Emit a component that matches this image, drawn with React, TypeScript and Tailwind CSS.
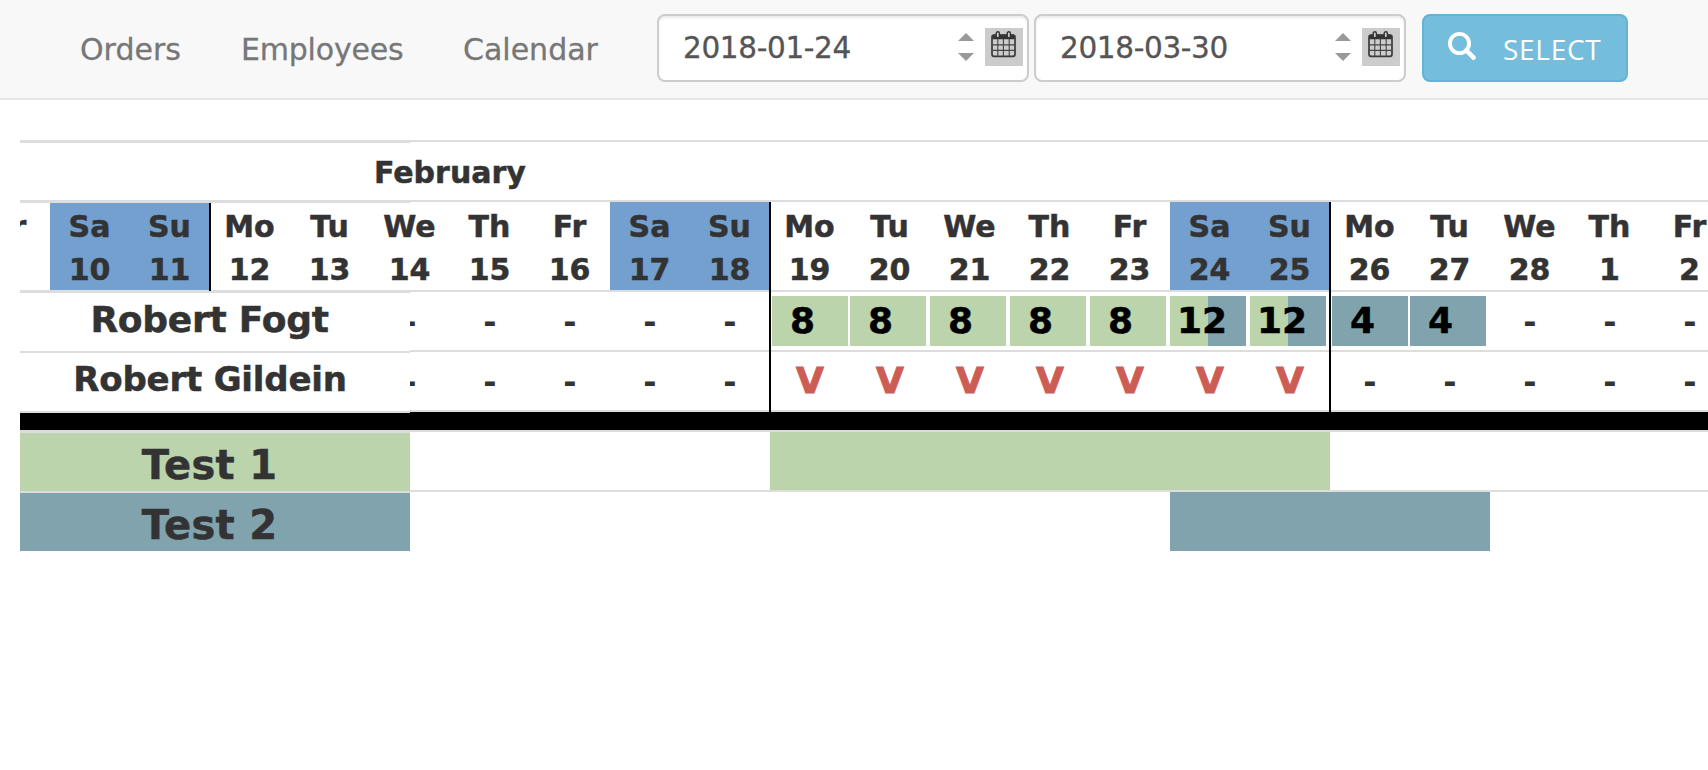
import React from "react";

type Day = { name: string; date: string; weekend: boolean };

const names = ["Fr", "Sa", "Su", "Mo", "Tu", "We", "Th"];
const days: Day[] = Array.from({ length: 22 }, (_, i) => ({
  name: names[i % 7],
  date: i === 0 ? "" : String(i + 9 > 28 ? i - 19 : i + 9),
  weekend: i % 7 === 1 || i % 7 === 2,
}));

function CalendarIcon() {
  return (
    <svg width="25" height="27" viewBox="0 0 25 27" className="block">
      <path d="M1.2 8.3V5.5Q1.2 3.4 3.2 3.4H21.8Q23.8 3.4 23.8 5.5V8.3Z" fill="#333" />
      <rect x="1" y="4" width="23" height="21.3" rx="2" fill="none" stroke="#3a3a3a" strokeWidth="1.7" />
      <path d="M6.8 8V25M12.4 8V25M18.2 8V25M1 13.9H24M1 19.4H24" stroke="#444" strokeWidth="1.1" />
      <rect x="5.2" y="0.8" width="3.2" height="6" rx="1.6" fill="#ccc" stroke="#333" strokeWidth="1.4" />
      <rect x="16.2" y="0.8" width="3.2" height="6" rx="1.6" fill="#ccc" stroke="#333" strokeWidth="1.4" />
    </svg>
  );
}

function DateInput({ value }: { value: string }) {
  return (
    <div className="flex h-[68px] w-[372px] shrink-0 items-start rounded-[8px] border-2 border-[#ccc] bg-white pl-[24px] shadow-[inset_0_2px_2px_rgba(0,0,0,0.075)]">
      <span className="mt-[11px] w-[275px] text-[29.5px] leading-[42px] tracking-[-0.35px] text-[#555] [-webkit-text-stroke:0.3px_#555]">{value}</span>
      <svg width="16" height="28" viewBox="0 0 16 28" className="mt-[17px] shrink-0">
        <path d="M0 8L8 0L16 8ZM0 20L8 28L16 20Z" fill="#999" />
      </svg>
      <span className="mt-[12px] ml-[11px] h-[38px] w-[38px] shrink-0 bg-[#ccc] pt-[3px] pl-[5.5px]">
        <CalendarIcon />
      </span>
    </div>
  );
}

function Hours({ total, kind }: { total: string; kind: "green" | "teal" | "both" }) {
  const fill =
    kind === "green"
      ? "bg-[#bcd4ac]"
      : kind === "teal"
        ? "bg-[#80a3ad]"
        : "bg-[linear-gradient(90deg,#bcd4ac_50%,#80a3ad_50%)]";
  return (
    <div className={`h-[50px] w-[76px] shrink-0 text-[36px] leading-[50px] font-bold text-black ${fill} ${kind === "both" ? "pl-[7px]" : "pl-[18px]"}`}>
      {total}
    </div>
  );
}

function Dash() {
  return <span className="w-[80px] shrink-0 text-center text-[32px] [-webkit-text-stroke:0px]">-</span>;
}

export default function App() {
  return (
    <div className="h-[770px] w-full overflow-hidden bg-white font-['DejaVu_Sans',Verdana,sans-serif] text-[#333]">
      <header className="flex h-[100px] items-start border-b-2 border-[#e7e7e7] bg-[#f8f8f8] pt-[14px]">
        <nav className="flex w-[657px] shrink-0 pl-[80px] text-[30px] leading-[71px] text-[#777] [-webkit-text-stroke:0.3px_#777]">
          <a className="w-[161px] shrink-0">Orders</a>
          <a className="w-[222px] shrink-0 tracking-[-0.2px]">Employees</a>
          <a>Calendar</a>
        </nav>
        <div className="flex shrink-0 gap-[5px]">
          <DateInput value="2018-01-24" />
          <DateInput value="2018-03-30" />
        </div>
        <button className="ml-[16px] flex h-[68px] w-[206px] shrink-0 items-start rounded-[8px] border-2 border-[#62b3d6] bg-[#75bddc] pl-[24px] text-white">
          <svg width="28" height="28" viewBox="0 0 28 28" className="mt-[16px] shrink-0">
            <circle cx="11.5" cy="11.5" r="9.6" fill="none" stroke="#fff" strokeWidth="3.8" />
            <path d="M18.5 18.5L25.5 25.7" stroke="#fff" strokeWidth="4.6" strokeLinecap="round" />
          </svg>
          <span className="mt-[12px] ml-[27px] font-['Open_Sans',sans-serif] text-[28px] leading-[42px] tracking-[0.7px]">SELECT</span>
        </button>
      </header>

      <main className="ml-[20px] pt-[40px] [-webkit-text-stroke:0.5px]">
        <div className="flex h-[60px]">
          <div className="w-[390px] shrink-0 border-t-3 border-[#ddd]" />
          <div className="w-[1298px] shrink-0 border-t-2 border-[#ddd]">
            <div className="ml-[-36px] pt-[9px] text-[30px] leading-[43px] font-bold">February</div>
          </div>
        </div>

        <div className="flex h-[3px] items-start">
          <div className="h-[3px] w-[390px] shrink-0 bg-[#ddd]" />
          <div className="h-[2px] w-[1298px] shrink-0 bg-[#ddd]" />
        </div>
        <div className="mt-[-1px] flex h-[88px] overflow-hidden">
          <div className="ml-[-50px] flex">
            {days.map((d, i) => (
              <div
                key={i}
                className={`w-[80px] shrink-0 pr-px text-center text-[30px] leading-[44px] font-bold ${d.weekend ? "bg-[#74a0d0]" : ""} ${i < 3 ? "border-t border-[#ddd] pt-[2px]" : "pt-[3px]"}`}
              >
                <div>{d.name}</div>
                <div className="mt-[-1px]">{d.date}</div>
              </div>
            ))}
          </div>
        </div>
        <div className="flex h-[3px] items-start">
          <div className="h-[3px] w-[390px] shrink-0 bg-[#ddd]" />
          <div className="h-[2px] w-[1298px] shrink-0 bg-[#ddd]" />
        </div>

        <div className="flex h-[137px]">
          <div className="w-[390px] shrink-0 bg-white text-[36px] font-bold">
            <div className="flex h-[60px] justify-center border-b-2 border-[#ddd] pr-[11px] leading-[54px] tracking-[-0.25px]">Robert Fogt</div>
            <div className="flex h-[60px] justify-center border-b-2 border-[#ddd] pr-[10px] text-[34px] leading-[53px] tracking-[-0.2px]">Robert Gildein</div>
            <div className="h-[17px] bg-black" />
          </div>
          <div className="mt-[-1px] w-[1298px] shrink-0 overflow-hidden text-[30px] font-bold">
            <div className="flex h-[60px] items-start border-b-2 border-[#ddd] pt-[4px]">
              <div className="-ml-[40px] flex shrink-0 leading-[53px]">
                {[0, 1, 2, 3, 4].map((i) => (
                  <Dash key={i} />
                ))}
              </div>
              <div className="ml-[2px] flex w-[558px] shrink-0">
                <div className="mr-[2px]">
                  <Hours total="8" kind="green" />
                </div>
                <div className="flex gap-[4px]">
                  {[0, 1, 2, 3].map((i) => (
                    <Hours key={i} total="8" kind="green" />
                  ))}
                  <Hours total="12" kind="both" />
                  <Hours total="12" kind="both" />
                </div>
              </div>
              <div className="ml-[2px] flex w-[158px] shrink-0 gap-[2px]">
                <Hours total="4" kind="teal" />
                <Hours total="4" kind="teal" />
              </div>
              <div className="flex shrink-0 leading-[53px]">
                {[0, 1, 2].map((i) => (
                  <Dash key={i} />
                ))}
              </div>
            </div>
            <div className="flex h-[60px] border-b-2 border-[#ddd] leading-[61px]">
              <div className="-ml-[40px] flex">
                {Array.from({ length: 17 }, (_, i) =>
                  i > 4 && i < 12 ? (
                    <span key={i} className="w-[80px] shrink-0 text-center text-[36px] leading-[58px] text-[#cd5c54] [-webkit-text-stroke:1px]">V</span>
                  ) : (
                    <Dash key={i} />
                  ),
                )}
              </div>
            </div>
            <div className="h-[18px] bg-black" />
          </div>
        </div>

        <div className="flex h-[121px] items-start">
          <div className="w-[390px] shrink-0 border-t-2 border-[#ddd] text-center text-[40px] font-bold tracking-[0.3px]">
            <div className="h-[61px] border-t border-b-2 border-t-[#ddd] border-b-[#ddd] bg-[#bcd4ac] pr-[11px] leading-[64px]">Test 1</div>
            <div className="h-[58px] bg-[#80a3ad] pr-[11px] leading-[65px]">Test 2</div>
          </div>
          <div className="w-[1298px] shrink-0 border-t-2 border-[#ddd]">
            <div className="h-[60px] border-b-2 border-[#ddd]">
              <div className="ml-[360px] h-[58px] w-[560px] bg-[#bcd4ac]" />
            </div>
            <div className="ml-[760px] h-[59px] w-[320px] bg-[#80a3ad]" />
          </div>
        </div>
      </main>
      <div className="absolute top-[203px] left-[209px] h-[88px] w-[2px] bg-black" />
      <div className="absolute top-[202px] left-[769px] h-[210px] w-[2px] bg-black" />
      <div className="absolute top-[202px] left-[1329px] h-[210px] w-[2px] bg-black" />
    </div>
  );
}
